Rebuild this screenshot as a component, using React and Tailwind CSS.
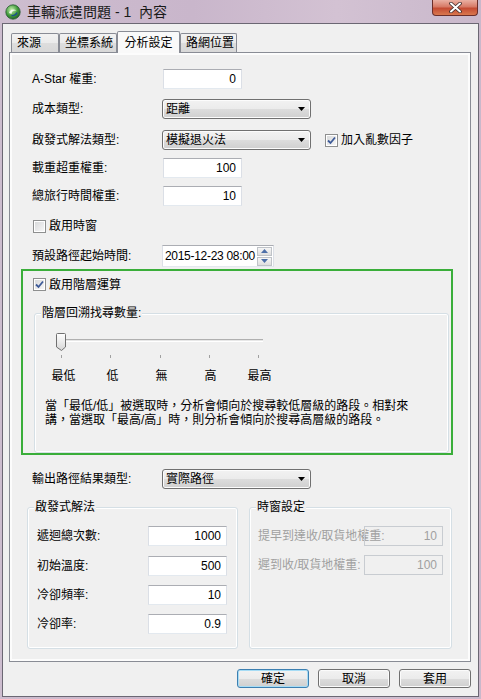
const font = "font-['Liberation_Sans','Noto_Sans_CJK_TC',sans-serif]"

function CheckBox({ checked }) {
  return (
    <div className="w-[13px] h-[13px] border border-[#8e8f8f] bg-white p-[1px] shrink-0">
      <div className="w-full h-full bg-[linear-gradient(135deg,#d9dadb,#f6f6f6)] flex items-center justify-center">
        {checked && (
          <svg width="9" height="9" viewBox="0 0 9 9">
            <path d="M1 4.5 L3.5 7 L8 1.5" fill="none" stroke="#3d5a98" strokeWidth="1.8" />
          </svg>
        )}
      </div>
    </div>
  )
}

function TextBox({ value, disabled, className = "" }) {
  return (
    <div
      className={`h-[20px] w-[79px] flex items-center justify-end pr-[5px] border text-[12px] leading-[14px] ${
        disabled
          ? "border-[#c8ccd1] text-[#a0a0a0]"
          : "bg-white border-t-[#abadb3] border-x-[#dbdfe6] border-b-[#e3e9ef] text-black"
      } ${className}`}
    >
      {value}
    </div>
  )
}

function Select({ value }) {
  return (
    <div className="h-[20px] w-[149px] rounded-[3px] border border-[#707070] bg-[linear-gradient(to_bottom,#f2f2f2_0%,#ebebeb_50%,#dddddd_50%,#cfcfcf_100%)] shadow-[inset_0_0_0_1px_#fcfcfc] flex items-center pl-[3px] pr-[5px]">
      <span className="text-[12px] leading-[14px]">{value}</span>
      <svg className="ml-auto" width="7" height="4" viewBox="0 0 7 4">
        <path d="M0 0 H7 L3.5 4 Z" fill="#000" />
      </svg>
    </div>
  )
}

function Row({ label, children, className = "" }) {
  return (
    <div className={`flex items-center h-[20px] pl-[22px] ${className}`}>
      <div className="w-[130px] text-[12px] leading-[14px] whitespace-nowrap">{label}</div>
      {children}
    </div>
  )
}

function GroupBox({ label, className = "", children }) {
  return (
    <div className={`relative border border-[#d5dfe5] rounded-[3px] shadow-[inset_0_0_0_1px_#fff] ${className}`}>
      <div className="absolute -top-[8px] left-[6px] px-[1px] bg-[#f0f0f0] text-[12px] leading-[14px]">
        {label}
      </div>
      {children}
    </div>
  )
}

function Button({ label, focused }) {
  return (
    <div
      className={`w-[72px] h-[19px] rounded-[3px] border flex items-center justify-center text-[12px] leading-[14px] bg-[linear-gradient(to_bottom,#f2f2f2_0%,#ebebeb_50%,#dddddd_50%,#cfcfcf_100%)] ${
        focused ? "border-[#3c7fb1] shadow-[inset_0_0_0_1px_#a6dcf5]" : "border-[#707070] shadow-[inset_0_0_0_1px_#fbfbfb]"
      }`}
    >
      {label}
    </div>
  )
}

function Tab({ label, selected, className = "" }) {
  return (
    <div
      className={`border border-b-0 border-[#898c95] rounded-t-[2px] text-[12px] leading-[14px] flex items-center ${
        selected
          ? "h-[22px] bg-[#f9f9f9] -mb-px relative z-10 justify-center"
          : "h-[19px] bg-[linear-gradient(to_bottom,#f2f2f2_0%,#ebebeb_50%,#dddddd_50%,#d8d8d8_100%)] pl-[5px]"
      } ${className}`}
    >
      {label}
    </div>
  )
}

function Spin({ up }) {
  return (
    <div className="w-[15px] h-[9px] border border-[#bfc3c8] bg-[linear-gradient(to_bottom,#f6f6f6,#dedede)] flex items-center justify-center">
      <svg width="7" height="4" viewBox="0 0 7 4">
        <path d={up ? "M0 4 H7 L3.5 0 Z" : "M0 0 H7 L3.5 4 Z"} fill="#4d6fa8" />
      </svg>
    </div>
  )
}

export default function App() {
  return (
    <div className={`w-[481px] h-[699px] flex flex-col px-[2px] pb-[2px] bg-[linear-gradient(to_right,#cdbdcf,#c9b6cb_40%,#d3c2d3_70%,#c9b8cb)] text-black ${font}`}>
      {/* title bar */}
      <div className="h-[23px] relative flex items-center pl-[3px]">
        <svg width="16" height="16" viewBox="0 0 16 16">
          <defs>
            <radialGradient id="g" cx="0.4" cy="0.35" r="0.7">
              <stop offset="0" stopColor="#c9f0b0" />
              <stop offset="0.6" stopColor="#3f9a3a" />
              <stop offset="1" stopColor="#1f5e2a" />
            </radialGradient>
          </defs>
          <circle cx="8" cy="8" r="7.2" fill="url(#g)" stroke="#2b5a35" strokeWidth="0.8" />
          <path d="M4 9 C4.5 5.5 9 4.5 11.5 6.5 C9 6 6.5 7 6.5 10 Z" fill="#fff" opacity="0.85" />
          <path d="M6.5 11.5 C9 12 11.5 10.5 12 8.5" fill="none" stroke="#1b4d8f" strokeWidth="1.4" />
        </svg>
        <span className="ml-[6px] text-[14px] leading-[16px] text-[#1a1a1a]">車輛派遣問題 - 1&nbsp;&nbsp;內容</span>
        <div className="absolute right-[1px] top-0 w-[46px] h-[16px] rounded-b-[4px] border border-t-0 border-[#6b2e2a] bg-[linear-gradient(to_bottom,#eab0a3_0%,#d77a66_45%,#c44b33_55%,#d9784e_100%)] flex items-center justify-center">
          <svg width="13" height="11" viewBox="0 0 13 11">
            <path d="M2 1.5 L11 9.5 M11 1.5 L2 9.5" stroke="#3a2a2a" strokeWidth="3.6" strokeLinecap="round" />
            <path d="M2 1.5 L11 9.5 M11 1.5 L2 9.5" stroke="#fff" strokeWidth="2" strokeLinecap="round" />
          </svg>
        </div>
      </div>

      {/* client area */}
      <div className="flex-1 border border-[#6b6773] bg-[#f0f0f0] pt-[7px] pl-[6px] flex flex-col">
        <div className="h-[21px] flex items-end pl-[2px]">
          <Tab label="來源" className="w-[48px]" />
          <Tab label="坐標系統" className="w-[58px]" />
          <Tab label="分析設定" selected className="w-[63px]" />
          <Tab label="路網位置" className="w-[57px]" />
        </div>

        <div className="w-[462px] h-[610px] border border-[#898c95] bg-[#f0f0f0] shadow-[inset_0_0_0_2px_#fcfcfc] flex flex-col">
          <Row label="A-Star 權重:" className="mt-[16px]">
            <TextBox value="0" className="ml-[1px] w-[78px]" />
          </Row>
          <Row label="成本類型:" className="mt-[10px]">
            <Select value="距離" />
          </Row>
          <Row label="啟發式解法類型:" className="mt-[11px]">
            <Select value="模擬退火法" />
            <div className="ml-[14px] flex items-center gap-[3px] text-[12px] leading-[14px]">
              <CheckBox checked />
              <span>加入亂數因子</span>
            </div>
          </Row>
          <Row label="載重超重權重:" className="mt-[8px]">
            <TextBox value="100" className="ml-[1px] w-[78px]" />
          </Row>
          <Row label="總旅行時間權重:" className="mt-[8px]">
            <TextBox value="10" className="ml-[1px] w-[78px]" />
          </Row>
          <div className="mt-[10px] h-[20px] pl-[23px] flex items-center gap-[3px] text-[12px] leading-[14px]">
            <CheckBox />
            <span>啟用時窗</span>
          </div>
          <Row label="預設路徑起始時間:" className="mt-[9px] h-[22px]">
            <div className="w-[112px] h-[22px] bg-white border border-t-[#abadb3] border-x-[#dbdfe6] border-b-[#e3e9ef] flex items-center pl-[2px] pr-[1px]">
              <span className="text-[12px] leading-[14px] whitespace-nowrap tracking-[-0.3px]">2015-12-23 08:00</span>
              <div className="ml-auto flex flex-col gap-[1px] shrink-0">
                <Spin up />
                <Spin />
              </div>
            </div>
          </Row>

          {/* hierarchy box */}
          <div className="mt-[2px] ml-[11px] w-[432px] h-[186px] border-2 border-[#3aae3a] flex flex-col">
            <div className="mt-[7px] ml-[10px] h-[13px] flex items-center gap-[3px] text-[12px] leading-[14px]">
              <CheckBox checked />
              <span>啟用階層運算</span>
            </div>
            <GroupBox label="階層回溯找尋數量:" className="mt-[22px] ml-[11px] mr-[2px] h-[140px]">
              <div className="mt-[17px] ml-[17px]">
                <svg width="220" height="30" viewBox="0 0 220 30">
                  <defs>
                    <linearGradient id="th" x1="0" y1="0" x2="0" y2="1">
                      <stop offset="0" stopColor="#ffffff" />
                      <stop offset="1" stopColor="#d6d6d6" />
                    </linearGradient>
                  </defs>
                  <rect x="8" y="8" width="203" height="1" fill="#b0b0b0" />
                  <rect x="8" y="9" width="203" height="1" fill="#e7e7e7" />
                  <rect x="8" y="10" width="203" height="1" fill="#ffffff" />
                  <path d="M5.5 2.5 H12.5 Q13.5 2.5 13.5 3.5 V16 L9.5 19.5 L4.5 16 V3.5 Q4.5 2.5 5.5 2.5 Z" fill="url(#th)" stroke="#707070" />
                  {[9, 58, 108, 157, 206].map((x) => (
                    <rect key={x} x={x} y="24" width="1" height="3" fill="#a0a0a0" />
                  ))}
                </svg>
              </div>
              <div className="mt-[8px] ml-[4px] flex text-[12px] leading-[14px]">
                {["最低", "低", "無", "高", "最高"].map((t) => (
                  <div key={t} className="w-[49px] text-center">{t}</div>
                ))}
              </div>
              <div className="mt-[16px] ml-[10px] text-[12px] leading-[14px] whitespace-nowrap">
                當「最低/低」被選取時，分析會傾向於搜尋較低層級的路段。相對來
                <br />
                講，當選取「最高/高」時，則分析會傾向於搜尋高層級的路段。
              </div>
            </GroupBox>
          </div>

          <Row label="輸出路徑結果類型:" className="mt-[14px]">
            <Select value="實際路徑" />
          </Row>

          <div className="mt-[18px] ml-[17px] flex gap-[11px]">
            <GroupBox label="啟發式解法" className="w-[211px] h-[142px] pt-[18px] pl-[9px]">
              {[
                ["遞迴總次數:", "1000", ""],
                ["初始溫度:", "500", "mt-[10px]"],
                ["冷卻頻率:", "10", "mt-[9px]"],
                ["冷卻率:", "0.9", "mt-[9px]"],
              ].map(([l, v, m]) => (
                <div key={l} className={`flex items-center h-[20px] ${m}`}>
                  <div className="w-[111px] text-[12px] leading-[14px]">{l}</div>
                  <TextBox value={v} />
                </div>
              ))}
            </GroupBox>
            <GroupBox label="時窗設定" className="w-[203px] h-[142px] pt-[18px] pl-[8px]">
              {[
                ["提早到達收/取貨地權重:", "10", ""],
                ["遲到收/取貨地權重:", "100", "mt-[9px]"],
              ].map(([l, v, m]) => (
                <div key={l} className={`flex items-center h-[20px] ${m}`}>
                  <div className="w-[106px] text-[12px] leading-[14px] whitespace-nowrap text-[#a0a0a0]">{l}</div>
                  <TextBox value={v} disabled />
                </div>
              ))}
            </GroupBox>
          </div>
        </div>

        <div className="mt-[7px] flex justify-end gap-[9px] pr-[7px]">
          <Button label="確定" focused />
          <Button label="取消" />
          <Button label="套用" />
        </div>
      </div>
    </div>
  )
}
